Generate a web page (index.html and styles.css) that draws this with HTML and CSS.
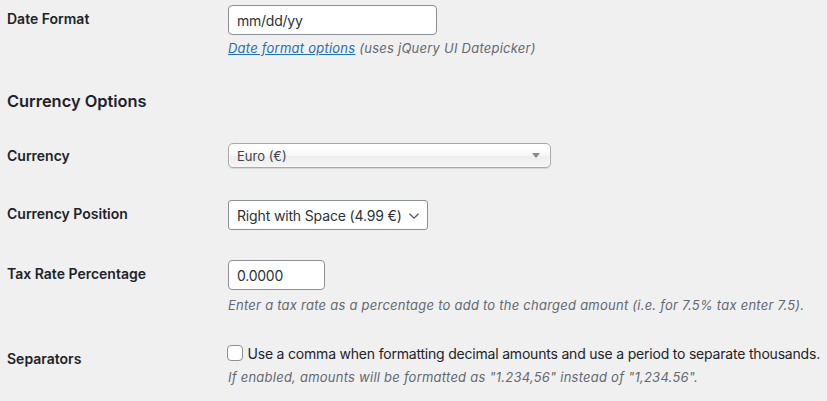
FILE: index.html
```html
<!DOCTYPE html>
<html lang="en">
<head>
<meta charset="utf-8">
<title>Settings</title>
<link rel="stylesheet" href="styles.css">
</head>
<body>
<div class="wrap">
  <div class="row row-date">
    <div class="label">Date Format</div>
    <div class="field">
      <input class="text-input date-input" type="text" value="mm/dd/yy">
      <p class="description"><a href="#">Date format options</a> (uses jQuery UI Datepicker)</p>
    </div>
  </div>

  <h2 class="section-title">Currency Options</h2>

  <div class="row row-currency">
    <div class="label">Currency</div>
    <div class="field">
      <div class="chosen">
        <span class="chosen-text">Euro (€)</span>
        <span class="chosen-arrow"></span>
      </div>
    </div>
  </div>

  <div class="row row-position">
    <div class="label">Currency Position</div>
    <div class="field">
      <div class="select-wrap">
        <select class="select">
          <option>Right with Space (4.99 €)</option>
        </select>
        <svg class="select-chevron" width="12" height="8" viewBox="0 0 12 8"><polyline points="1.5,1.8 6,6.2 10.5,1.8" fill="none" stroke="#50575e" stroke-width="1.3"/></svg>
      </div>
    </div>
  </div>

  <div class="row row-tax">
    <div class="label">Tax Rate Percentage</div>
    <div class="field">
      <input class="text-input tax-input" type="text" value="0.0000">
      <p class="description desc-tax">Enter a tax rate as a percentage to add to the charged amount (i.e. for 7.5% tax enter 7.5).</p>
    </div>
  </div>

  <div class="row row-sep">
    <div class="label">Separators</div>
    <div class="field">
      <label class="check-label"><span class="checkbox"></span>Use a comma when formatting decimal amounts and use a period to separate thousands.</label>
      <p class="description desc-sep">If enabled, amounts will be formatted as "1.234,56" instead of "1,234.56".</p>
    </div>
  </div>
</div>
</body>
</html>
```
FILE: styles.css
```css
html, body {
  margin: 0;
  padding: 0;
  background: #f0f0f1;
}
body {
  font-family: Inter, "Noto Sans", sans-serif;
  font-size: 14px;
  color: #1d2327;
  overflow: hidden;
}
.wrap {
  padding-left: 7px;
}
.row {
  display: flex;
  align-items: flex-start;
}
.label {
  width: 221px;
  flex-shrink: 0;
  font-weight: 600;
  font-size: 14px;
  line-height: 18px;
  color: #1d2327;
}
.field {
  flex: 1;
  min-width: 0;
}
.text-input {
  display: block;
  box-sizing: border-box;
  height: 30px;
  margin: 0;
  padding: 0 8px;
  border: 1px solid #8c8f94;
  border-radius: 4px;
  background: #fff;
  font-family: Inter, "Noto Sans", sans-serif;
  font-size: 14px;
  letter-spacing: -0.25px;
  color: #2c3338;
  outline: none;
}
.date-input { width: 209px; }
.tax-input { width: 97px; }
.description {
  margin: 4px 0 0;
  font-size: 13px;
  line-height: 19px;
  font-style: italic;
  letter-spacing: 0.24px;
  color: #646970;
}
.description a {
  color: #2271b1;
  text-decoration: underline;
}
.desc-tax { margin-top: 6px; }
.section-title {
  margin: 32px 0 0;
  font-size: 16.4px;
  line-height: 22px;
  font-weight: 600;
  color: #1d2327;
}

/* row offsets */
.row-date .field { padding-top: 5px; }
.row-date .label { padding-top: 9.5px; }
.row-currency .field { padding-top: 31px; }
.row-currency .label { padding-top: 35px; }
.row-position .field { padding-top: 32px; }
.row-position .label { padding-top: 37px; }
.row-tax .field { padding-top: 30px; }
.row-tax .label { padding-top: 35px; }
.row-sep .field { padding-top: 28.5px; }
.row-sep .label { padding-top: 35px; }

/* chosen-like select */
.chosen {
  box-sizing: border-box;
  width: 323px;
  height: 25px;
  display: flex;
  align-items: center;
  padding: 0 0 0 8px;
  border: 1px solid #aaa;
  border-radius: 5px;
  background: linear-gradient(#fff 20%, #f6f6f6 50%, #eee 52%, #f4f4f4 100%);
  box-shadow: inset 0 0 3px #fff, 0 1px 1px rgba(0,0,0,0.1);
  font-size: 13px;
  color: #444;
  position: relative;
}
.chosen-text { flex: 1; }
.chosen-arrow {
  width: 0;
  height: 0;
  margin-right: 10px;
  border-left: 4px solid transparent;
  border-right: 4px solid transparent;
  border-top: 5px solid #888;
}

/* native select */
.select-wrap {
  position: relative;
  width: 200px;
}
.select {
  -webkit-appearance: none;
  appearance: none;
  box-sizing: border-box;
  width: 200px;
  height: 30px;
  margin: 0;
  padding: 0 24px 0 8px;
  border: 1px solid #8c8f94;
  border-radius: 3px;
  background: #fff;
  font-family: Inter, "Noto Sans", sans-serif;
  font-size: 14px;
  letter-spacing: -0.15px;
  color: #2c3338;
  outline: none;
}
.select-chevron {
  position: absolute;
  right: 8px;
  top: 12px;
  pointer-events: none;
}

/* checkbox */
.check-label {
  display: flex;
  align-items: center;
  line-height: 19px;
  font-size: 14px;
  letter-spacing: -0.2px;
  color: #1d2327;
  white-space: nowrap;
}
.checkbox {
  box-sizing: border-box;
  width: 16px;
  height: 16px;
  margin: 0 5px 0 -1.5px;
  border: 1px solid #8c8f94;
  border-radius: 4px;
  background: #fff;
  flex-shrink: 0;
}
.desc-sep { margin-top: 5px; }
```
